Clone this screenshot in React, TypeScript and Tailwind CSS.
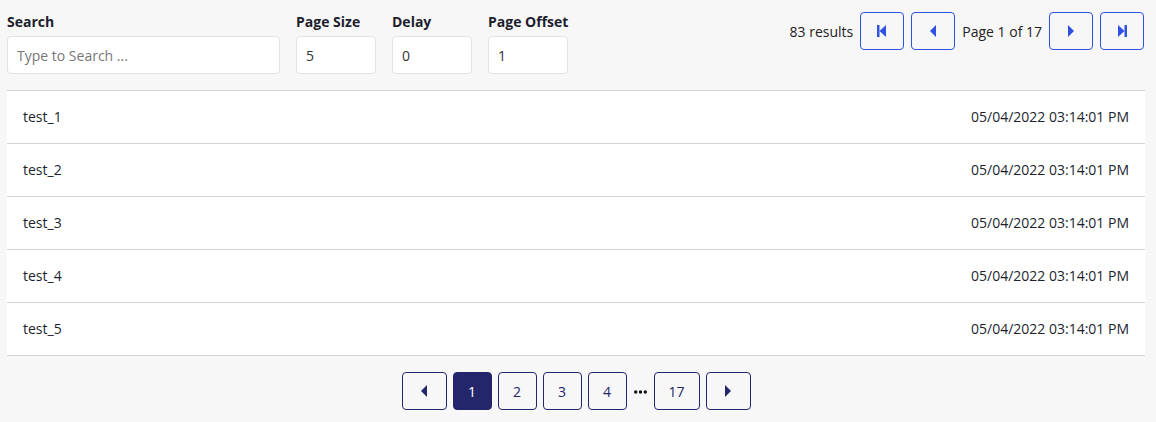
import React from 'react'

const rows = ['test_1', 'test_2', 'test_3', 'test_4', 'test_5']

function First() {
  return (
    <svg width="10" height="12" viewBox="0 0 10 12">
      <rect x="0" y="0" width="2.5" height="12" fill="currentColor" />
      <path d="M9 0 L2.5 6 L9 12 Z" fill="currentColor" />
    </svg>
  )
}

function Last() {
  return (
    <svg width="10" height="12" viewBox="0 0 10 12">
      <rect x="7.5" y="0" width="2.5" height="12" fill="currentColor" />
      <path d="M1 0 L7.5 6 L1 12 Z" fill="currentColor" />
    </svg>
  )
}

function Prev() {
  return (
    <svg width="8" height="12" viewBox="0 0 8 12">
      <path d="M7 0 L1 6 L7 12 Z" fill="currentColor" />
    </svg>
  )
}

function Next() {
  return (
    <svg width="8" height="12" viewBox="0 0 8 12">
      <path d="M1 0 L7 6 L1 12 Z" fill="currentColor" />
    </svg>
  )
}

function Dots() {
  return (
    <svg width="13" height="4" viewBox="0 0 13 4" className="mt-[2px] mx-[1px]">
      <circle cx="1.7" cy="2" r="1.7" fill="#111" />
      <circle cx="6.5" cy="2" r="1.7" fill="#111" />
      <circle cx="11.3" cy="2" r="1.7" fill="#111" />
    </svg>
  )
}

function Field({ label, value, placeholder, width }: { label: string; value?: string; placeholder?: string; width: string }) {
  return (
    <div className="flex flex-col">
      <label className="text-[14px] font-bold text-[#1c1f2e] leading-[20px] mb-[4px] pt-[1px]">{label}</label>
      <input
        className={`${width} h-[38px] bg-white border border-[#e3e3e3] rounded-[4px] px-[9px] text-[14px] text-[#333] placeholder:text-[#777] outline-none`}
        defaultValue={value}
        placeholder={placeholder}
      />
    </div>
  )
}

export default function App() {
  const topBtn = 'w-[44px] h-[38px] flex items-center justify-center border border-[#2f52e0] rounded-[4px] text-[#2f52e0] bg-transparent'
  const pageBtn = 'h-[38px] flex items-center justify-center border border-[#24266b] rounded-[4px] text-[14px] text-[#24266b] bg-transparent'

  return (
    <div className="w-[1156px] h-[422px] bg-[#f7f7f7] pl-[7px] pr-[11px] pt-[11px] text-[#222] overflow-hidden" style={{ fontFamily: '"Open Sans", "Noto Sans", sans-serif' }}>
      <div className="flex items-start justify-between">
        <div className="flex gap-[16px]">
          <Field label="Search" placeholder="Type to Search ..." width="w-[273px]" />
          <Field label="Page Size" value="5" width="w-[80px]" />
          <Field label="Delay" value="0" width="w-[80px]" />
          <Field label="Page Offset" value="1" width="w-[80px]" />
        </div>
        <div className="flex items-center gap-[7px] pt-[1px] pr-[1px]">
          <span className="text-[14px] text-[#222]">83 results</span>
          <button className={topBtn}><First /></button>
          <button className={topBtn}><Prev /></button>
          <span className="text-[14px] text-[#222]">Page 1 of 17</span>
          <button className={topBtn}><Next /></button>
          <button className={topBtn}><Last /></button>
        </div>
      </div>

      <div className="mt-[16px] bg-white border-t border-[#d4d4d4]">
        {rows.map((r) => (
          <div key={r} className="h-[53px] flex items-center justify-between px-[16px] border-b border-[#d4d4d4] text-[14px] text-[#1c1f2e]">
            <span className="mt-[-2px]">{r}</span>
            <span className="mt-[-2px]">05/04/2022 03:14:01 PM</span>
          </div>
        ))}
      </div>

      <div className="flex items-center justify-center gap-[6px] mt-[16px]">
        <button className={`${pageBtn} w-[45px]`}><Prev /></button>
        <button className="h-[38px] w-[39px] flex items-center justify-center rounded-[4px] text-[14px] text-white bg-[#24266b] border border-[#24266b]">1</button>
        <button className={`${pageBtn} w-[39px]`}>2</button>
        <button className={`${pageBtn} w-[39px]`}>3</button>
        <button className={`${pageBtn} w-[39px]`}>4</button>
        <Dots />
        <button className={`${pageBtn} w-[46px]`}>17</button>
        <button className={`${pageBtn} w-[45px]`}><Next /></button>
      </div>
    </div>
  )
}
